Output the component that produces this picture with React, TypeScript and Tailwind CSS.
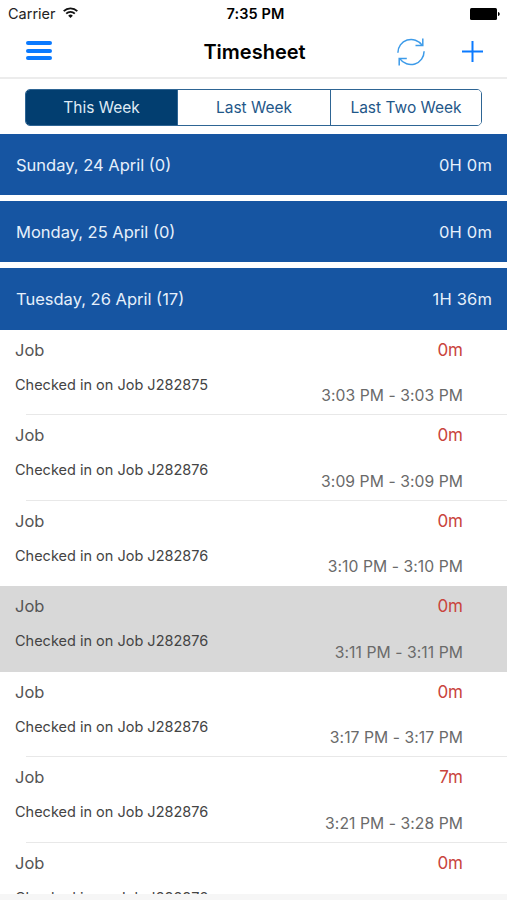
import { useState } from 'react'
import clsx from 'clsx'

interface Day {
  label: string
  total: string
}

interface Entry {
  note: string
  duration: string
  time: string
  selected?: boolean
}

const tabs = ['This Week', 'Last Week', 'Last Two Week']

const days: Day[] = [
  { label: 'Sunday, 24 April (0)', total: '0H 0m' },
  { label: 'Monday, 25 April (0)', total: '0H 0m' },
  { label: 'Tuesday, 26 April (17)', total: '1H 36m' }
]

const entries: Entry[] = [
  { note: 'Checked in on Job J282875', duration: '0m', time: '3:03 PM - 3:03 PM' },
  { note: 'Checked in on Job J282876', duration: '0m', time: '3:09 PM - 3:09 PM' },
  { note: 'Checked in on Job J282876', duration: '0m', time: '3:10 PM - 3:10 PM' },
  { note: 'Checked in on Job J282876', duration: '0m', time: '3:11 PM - 3:11 PM', selected: true },
  { note: 'Checked in on Job J282876', duration: '0m', time: '3:17 PM - 3:17 PM' },
  { note: 'Checked in on Job J282876', duration: '7m', time: '3:21 PM - 3:28 PM' },
  { note: 'Checked in on Job J282876', duration: '0m', time: '' }
]

function StatusBar() {
  return (
    <div className="grid h-[27px] grid-cols-3 items-center pl-2 pr-[7px] text-[14.5px] text-[#222]">
      <div className="flex items-center gap-[7px]">
        <span>Carrier</span>
        <svg className="mb-[3px] h-[11px] w-[15px]" viewBox="0 0 15 11" fill="none" stroke="#111" strokeWidth="1.8">
          <path d="M.7 4.1a9.6 9.6 0 0 1 13.6 0" />
          <path d="M3.2 6.7a6.1 6.1 0 0 1 8.6 0" />
          <path d="M7.5 11 5.2 8.7a3.2 3.2 0 0 1 4.6 0z" fill="#111" stroke="none" />
        </svg>
      </div>
      <span className="pl-[3px] text-center font-semibold tracking-[0.1px] text-black">7:35 PM</span>
      <svg className="h-3 w-[30px] justify-self-end" viewBox="0 0 30 12">
        <rect width="27" height="12" rx="1.5" />
        <path d="M28 4c2.3.4 2.3 3.6 0 4z" />
      </svg>
    </div>
  )
}

function NavBar() {
  return (
    <div className="grid h-[52px] grid-cols-3 items-center border-b-2 border-[#ececec] pl-[26px] pr-6">
      <button className="flex w-[26px] flex-col gap-[3.3px] pb-[3px]">
        <span className="h-1 w-full rounded-full bg-[#0a7aff]" />
        <span className="h-1 w-full rounded-full bg-[#0a7aff]" />
        <span className="h-1 w-full rounded-full bg-[#0a7aff]" />
      </button>
      <h1 className="text-center text-[20px] font-semibold text-black">Timesheet</h1>
      <div className="flex items-center justify-end gap-[37px]">
        <svg className="h-7 w-7" viewBox="0 0 28 28" fill="none" stroke="#3d9be9" strokeWidth="1.5">
          <path d="M.9 14.8A13.2 13.2 0 0 1 25 7.2" />
          <path d="M25.8.5v7h-7.3" />
          <path d="M27.1 13.2A13.2 13.2 0 0 1 3 20.8" />
          <path d="M2.2 27.5v-7h7.6" />
        </svg>
        <svg className="mb-[2px] h-[21px] w-[21px]" viewBox="0 0 21 21" stroke="#0a7aff" strokeWidth="2">
          <path d="M10.5 0v21M0 10.5h21" />
        </svg>
      </div>
    </div>
  )
}

export default function App() {
  const [activeTab, setActiveTab] = useState('This Week')

  return (
    <div className="flex h-[900px] w-[507px] flex-col overflow-hidden bg-white font-['Inter',sans-serif]">
      <StatusBar />
      <NavBar />

      {/* Range tabs */}
      <div className="h-[55px] shrink-0 px-[25px] pt-[9.5px]">
        <div className="grid h-[37px] grid-cols-[152px_153px_1fr] divide-x divide-[#2e6594] overflow-hidden rounded-[5px] border border-[#2e6594]">
          {tabs.map(tab => (
            <button
              key={tab}
              onClick={() => setActiveTab(tab)}
              className={clsx(
                'pt-[2px] text-[15.5px]',
                activeTab === tab ? 'bg-[#023e70] text-[#dfeaf5]' : 'bg-white text-[#1f5789]'
              )}
            >
              {tab}
            </button>
          ))}
        </div>
      </div>

      {/* Day headers */}
      <div className="flex shrink-0 flex-col gap-[6px]">
        {days.map(day => (
          <div
            key={day.label}
            className="flex h-[61.2px] items-center justify-between bg-[#1655a2] pl-4 pr-[15px] pt-px text-[16.5px] text-[#e6f0fb]"
          >
            <span>{day.label}</span>
            <span className="tracking-[0.15px]">{day.total}</span>
          </div>
        ))}
      </div>

      {/* Entries */}
      <div className="min-h-0 flex-1 overflow-hidden">
        {entries.map((entry, i) => (
          <div key={i} className={clsx('flex h-[85.55px] flex-col', entry.selected && 'bg-[#d8d8d8]')}>
            <div className="flex flex-1 justify-between pl-[15px] pr-[44px] pt-[9px]">
              <div className="flex flex-col gap-[14px]">
                <span className="text-[16.5px] leading-[22px] text-[#555]">Job</span>
                <span className="text-[14.5px] leading-[20px] text-[#444]">{entry.note}</span>
              </div>
              <div className="flex flex-col items-end gap-[25.4px]">
                <span className="text-[17px] leading-[22px] text-[#c9443c]">{entry.duration}</span>
                <span className="text-[15.7px] leading-[20px] tracking-[0.06px] text-[#6a6a6a]">{entry.time}</span>
              </div>
            </div>
            <div className={clsx('ml-[26px] h-px', !entry.selected && !entries[i + 1]?.selected && 'bg-[#e8e8e8]')} />
          </div>
        ))}
      </div>

      <div className="h-[6px] shrink-0 bg-[#f6f6f6]" />
    </div>
  )
}
